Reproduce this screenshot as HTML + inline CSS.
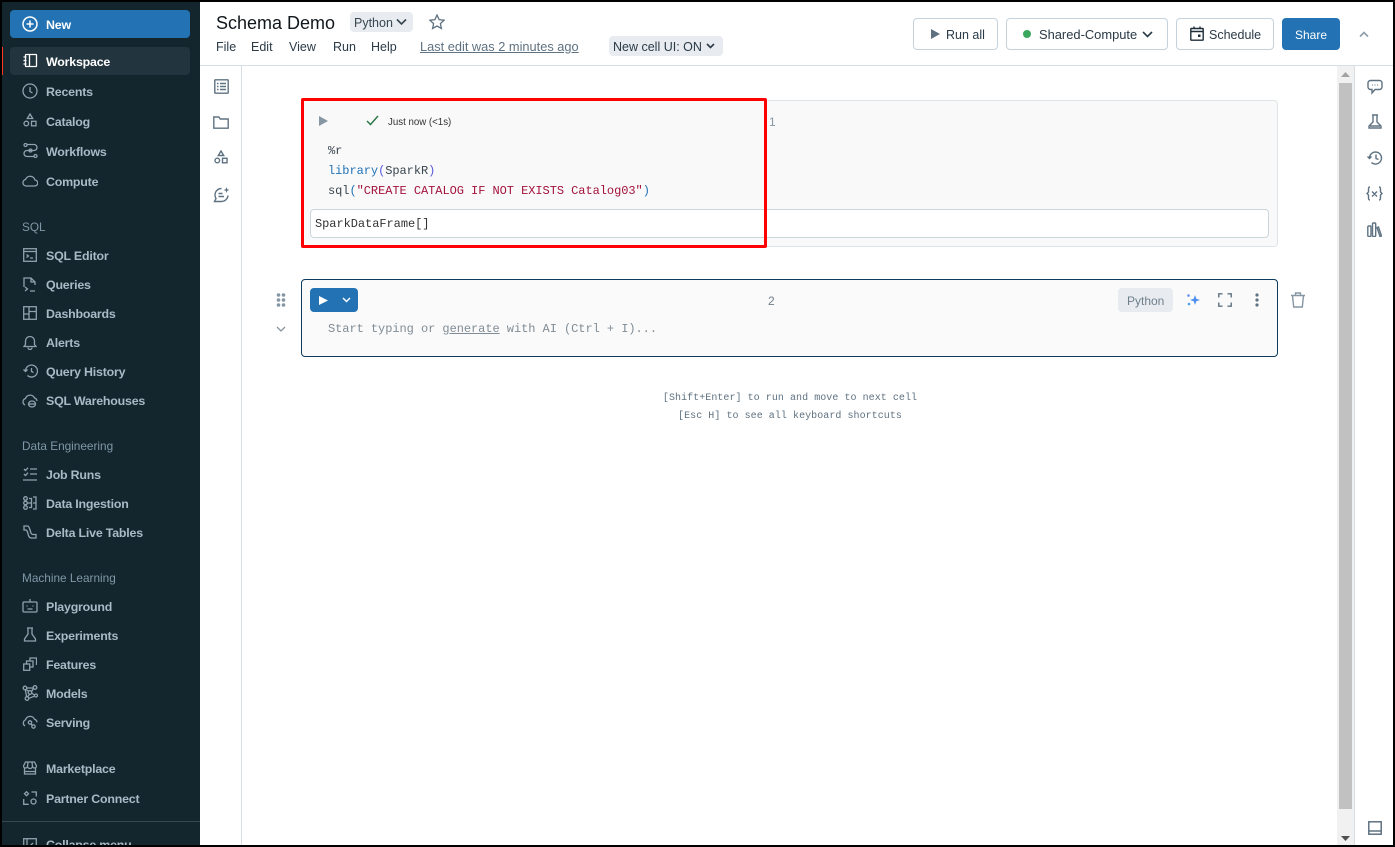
<!DOCTYPE html>
<html><head><meta charset="utf-8"><style>
*{box-sizing:border-box}
html,body{margin:0;padding:0;width:1395px;height:847px;overflow:hidden;background:#fff}
body{font-family:"Liberation Sans",sans-serif;position:relative;color:#1f2d38}
.a{position:absolute;white-space:nowrap}
.n{position:absolute;left:46px;margin-top:1px;font-size:12.400px;letter-spacing:-.2px;font-weight:700;color:#a9bac6;white-space:nowrap;line-height:16px}
.h{position:absolute;left:22px;font-size:11.800px;color:#7f97a6;white-space:nowrap;line-height:16px}
svg.i{position:absolute;fill:none;stroke:#8ea2af;stroke-width:1.3}
svg.g{position:absolute;fill:none;stroke:#5f7281;stroke-width:1.4}
.m{font-family:"Liberation Mono",monospace;letter-spacing:-.05px}
.btn{position:absolute;border:1px solid #c5d2dc;border-radius:4px;background:#fff;height:32px;top:18px}
.t{font-size:12.500px;line-height:16px;color:#2a3a47}
</style></head><body>

<div style="position:absolute;left:0;top:0;right:0;bottom:0;z-index:9;border:2px solid #000;pointer-events:none"></div>

<div style="position:absolute;left:0;top:2px;width:200px;height:843px;background:#13262e"></div>
<div class="a" style="left:10px;top:10px;width:180px;height:28px;background:#2272b4;border-radius:4px"></div>
<svg class="i" style="left:22px;top:16px;stroke:#fff;stroke-width:1.5" width="16" height="16" viewBox="0 0 16 16"><circle cx="8" cy="8" r="7"/><path d="M8 4.500v7M4.500 8h7"/></svg>
<div class="n" style="top:16px;color:#fff">New</div>
<div class="a" style="left:10px;top:47px;width:180px;height:28px;background:#22353f;border-radius:4px"></div>
<div class="a" style="left:2px;top:47px;width:1px;height:28px;background:#ff3621"></div>
<svg class="i" style="left:23px;top:53px;stroke:#fff" width="15" height="15" viewBox="0 0 15 15"><rect x="2.500" y="1.500" width="11" height="12" rx=".5"/><path d="M6.500 1.500v12M.5 4h3M.5 7.500h3M.5 11h3"/></svg>
<div class="n" style="top:53px;color:#fff">Workspace</div>

<svg class="i" style="left:22px;top:83px" width="16" height="16" viewBox="0 0 16 16"><circle cx="8" cy="8" r="7"/><path d="M8 4v4.500l2.500 1.500"/></svg>
<div class="n" style="top:83px">Recents</div>
<svg class="i" style="left:23px;top:113px" width="14" height="15" viewBox="0 0 14 15"><path d="M7 1l2.700 4.500H4.300z"/><circle cx="3.300" cy="10.500" r="2.300"/><rect x="8.500" y="8.300" width="4.500" height="4.500"/></svg>
<div class="n" style="top:113px">Catalog</div>
<svg class="i" style="left:23px;top:143px" width="15" height="15" viewBox="0 0 15 15"><path d="M4 1.500h7M4 7.500h7a2.500 2.500 0 0 0 0-6M4 7.500a3 3 0 0 0 0 6h7"/><circle cx="2.500" cy="2" r="1.500"/><circle cx="7.500" cy="7.500" r="1.500"/><circle cx="12.500" cy="13" r="1.500"/></svg>
<div class="n" style="top:143px">Workflows</div>
<svg class="i" style="left:22px;top:174px" width="16" height="14" viewBox="0 0 16 14"><path d="M4 12h8.500a3 3 0 0 0 .5-6 5 5 0 0 0-9.500-.5A3.300 3.300 0 0 0 4 12z"/></svg>
<div class="n" style="top:173px">Compute</div>

<div class="h" style="top:219px">SQL</div>
<svg class="i" style="left:23px;top:248px" width="14" height="14" viewBox="0 0 14 14"><rect x=".7" y=".7" width="12.600" height="12.600"/><path d="M.7 3.500h12.600M3.500 6.500l2 1.500-2 1.500M7 10h3"/></svg>
<div class="n" style="top:247px">SQL Editor</div>
<svg class="i" style="left:23px;top:277px" width="14" height="15" viewBox="0 0 14 15"><path d="M1 10V1h7l4 4v3M8 1v4h4M2 10l2.500 2L2 14M7 14h5"/></svg>
<div class="n" style="top:276px">Queries</div>
<svg class="i" style="left:23px;top:306px" width="14" height="14" viewBox="0 0 14 14"><rect x=".7" y=".7" width="12.600" height="12.600"/><path d="M6 .7v12.600M.7 8H6M6 5.500h7.300"/></svg>
<div class="n" style="top:305px">Dashboards</div>
<svg class="i" style="left:23px;top:335px" width="14" height="15" viewBox="0 0 14 15"><path d="M1 11.500h12l-1.500-2V6a4.500 4.500 0 0 0-9 0v3.500zM5 12.500a2 2 0 0 0 4 0"/></svg>
<div class="n" style="top:334px">Alerts</div>
<svg class="i" style="left:22px;top:364px" width="16" height="14" viewBox="0 0 16 14"><path d="M3.500 7a6 6 0 1 1 2 4.500M1.500 5.500l2 2 2-2M9.500 4v3.500l2 1"/></svg>
<div class="n" style="top:363px">Query History</div>
<svg class="i" style="left:22px;top:393px" width="16" height="15" viewBox="0 0 16 15"><path d="M3 12a3.500 3.500 0 0 1 .5-6.500 4.800 4.800 0 0 1 9-.5 3.500 3.500 0 0 1 2.500 3"/><ellipse cx="10" cy="11" rx="3.500" ry="3"/><path d="M6.500 11h7"/></svg>
<div class="n" style="top:392px">SQL Warehouses</div>

<div class="h" style="top:438px">Data Engineering</div>
<svg class="i" style="left:23px;top:467px" width="14" height="14" viewBox="0 0 14 14"><path d="M0 13h14M7 2h7M7 7h7M1 2l1.500 1.500L5 .7M1 7l1.500 1.500L5 5.700"/></svg>
<div class="n" style="top:466px">Job Runs</div>
<svg class="i" style="left:23px;top:496px" width="14" height="14" viewBox="0 0 14 14"><circle cx="2.500" cy="2.500" r="1.800"/><circle cx="2.500" cy="7" r="1.800"/><circle cx="2.500" cy="11.500" r="1.800"/><path d="M4.500 7H8M6 2.500h2.500v9H6M10 1h3v12h-3M10 7h3"/></svg>
<div class="n" style="top:495px">Data Ingestion</div>
<svg class="i" style="left:23px;top:525px" width="14" height="14" viewBox="0 0 14 14"><path d="M1 1h3.500c1 0 1.500 1 2 2.500L8 8c.5 1 1 1.500 2 1.500h3V13H8.500C7 13 6 12 5.500 10.500L4.500 7C4 5.500 3.500 5 2.500 5H1z"/></svg>
<div class="n" style="top:524px">Delta Live Tables</div>

<div class="h" style="top:570px">Machine Learning</div>
<svg class="i" style="left:22px;top:598px" width="16" height="15" viewBox="0 0 16 15"><rect x="1" y="4" width="14" height="10" rx="1"/><path d="M8 4V1M5 7.500v1M11 7.500v1M5.500 11h5"/></svg>
<div class="n" style="top:598px">Playground</div>
<svg class="i" style="left:23px;top:627px" width="14" height="15" viewBox="0 0 14 15"><path d="M4 1h6M5 1v6L1.500 12v2h11v-2L9 7V1"/></svg>
<div class="n" style="top:627px">Experiments</div>
<svg class="i" style="left:23px;top:657px" width="14" height="14" viewBox="0 0 14 14"><rect x=".7" y="7" width="6" height="6.300"/><path d="M3.500 7V4h6.500v6H7M7 4V1h6.500v7"/></svg>
<div class="n" style="top:656px">Features</div>
<svg class="i" style="left:22px;top:685px" width="16" height="16" viewBox="0 0 16 16"><circle cx="3" cy="3" r="1.800"/><circle cx="13" cy="2.500" r="1.800"/><circle cx="8" cy="7.500" r="1.800"/><circle cx="14" cy="10.500" r="1.500"/><circle cx="5" cy="13.500" r="1.800"/><path d="M4.500 3h7M4 4.500l2.800 1.800M11.500 3.500L9.500 6.500M9.500 8l3 2M7.500 9.500L5.500 11.800M12.800 11L7 13.300M3.300 4.800l1.300 6.800"/></svg>
<div class="n" style="top:685px">Models</div>
<svg class="i" style="left:22px;top:715px" width="16" height="14" viewBox="0 0 16 14"><path d="M3 11a3.500 3.500 0 0 1 .5-6.200 4.800 4.800 0 0 1 9-.5 3.500 3.500 0 0 1 2.500 3"/><circle cx="8" cy="7.500" r="1.700"/><circle cx="11.500" cy="11.500" r="1.700"/><path d="M9 9l1.500 1.500"/></svg>
<div class="n" style="top:714px">Serving</div>
<svg class="i" style="left:23px;top:761px" width="14" height="14" viewBox="0 0 14 14"><path d="M2.500 1h9L13.500 5a2 2 0 0 1-4 0 2.300 2.300 0 0 1-5 0 2 2 0 0 1-4 0zM1.500 7v6h11V7M1.500 10.500h11M5 1L4.500 5M9 1l.5 4"/></svg>
<div class="n" style="top:760px">Marketplace</div>
<svg class="i" style="left:23px;top:791px" width="14" height="14" viewBox="0 0 14 14"><path d="M3.500 .7l2 2-2 2-2-2zM8.500 1h4.800v4.500M.7 8v5.300h5"/><circle cx="10.500" cy="10.500" r="2.500"/></svg>
<div class="n" style="top:790px">Partner Connect</div>
<div class="a" style="left:2px;top:821px;width:198px;height:1px;background:#35474f"></div>
<svg class="i" style="left:23px;top:838px" width="14" height="14" viewBox="0 0 14 14"><rect x=".7" y=".7" width="12.600" height="12.600"/><path d="M4 .7v12.600M10 5L7.500 7.500 10 10"/></svg>
<div class="n" style="top:836px">Collapse menu</div>

<!-- top bar -->
<div class="a" style="left:200px;top:65px;width:1193px;height:1px;background:#d8dfe4"></div>
<div class="a" style="left:216px;top:12px;font-size:18px;line-height:22px;color:#11171c">Schema Demo</div>
<div class="a" style="left:350px;top:12px;width:63px;height:20px;background:#e8ecf0;border-radius:4px"></div>
<div class="a t" style="left:354px;top:15px;color:#37454f">Python</div>
<svg class="g" style="left:396px;top:18px;stroke:#37454f;stroke-width:1.600" width="11" height="8" viewBox="0 0 11 8"><path d="M1 1.500l4.500 4.500L10 1.500"/></svg>
<svg class="g" style="left:429px;top:14px;stroke-width:1.300" width="16" height="16" viewBox="0 0 16 16"><path d="M8 1l2.100 4.600 5 .6-3.700 3.400 1 4.900L8 12l-4.400 2.500 1-4.900L.9 6.200l5-.6z"/></svg>
<div class="a t" style="left:216px;top:39px">File</div>
<div class="a t" style="left:251px;top:39px">Edit</div>
<div class="a t" style="left:289px;top:39px">View</div>
<div class="a t" style="left:333px;top:39px">Run</div>
<div class="a t" style="left:371px;top:39px">Help</div>
<div class="a t" style="left:420px;top:39px;font-size:12.800px;color:#5f7281;text-decoration:underline">Last edit was 2 minutes ago</div>
<div class="a" style="left:609px;top:36px;width:114px;height:20px;background:#e8ecf0;border-radius:4px"></div>
<div class="a t" style="left:613px;top:39px">New cell UI: ON</div>
<svg class="g" style="left:706px;top:43px;stroke:#2a3a47;stroke-width:1.600" width="9" height="6" viewBox="0 0 9 6"><path d="M1 1l3.500 3.500L8 1"/></svg>

<div class="btn" style="left:913px;width:85px"></div>
<svg class="a" style="left:931px;top:29px" width="9" height="10" viewBox="0 0 9 10"><path d="M0 0l9 5-9 5z" fill="#5f7281"/></svg>
<div class="a t" style="left:946px;top:27px">Run all</div>
<div class="btn" style="left:1006px;width:162px"></div>
<div class="a" style="left:1023px;top:30px;width:8px;height:8px;border-radius:50%;background:#3ba65e"></div>
<div class="a t" style="left:1039px;top:27px;font-size:12.900px">Shared-Compute</div>
<svg class="g" style="left:1142px;top:31px;stroke:#2a3a47;stroke-width:1.600" width="11" height="7" viewBox="0 0 11 7"><path d="M1 1l4.500 4.500L10 1"/></svg>
<div class="btn" style="left:1176px;width:98px"></div>
<svg class="g" style="left:1190px;top:26px;stroke:#1f2d38" width="14" height="15" viewBox="0 0 14 15"><rect x=".8" y="2.500" width="12.400" height="11.700" rx=".5"/><path d="M.8 5.500h12.400M4 .5v2M10 .5v2"/><rect x="8" y="8.500" width="2.500" height="2.500" fill="#1f2d38" stroke="none"/></svg>
<div class="a t" style="left:1209px;top:27px">Schedule</div>
<div class="a" style="left:1282px;top:18px;width:58px;height:32px;background:#2272b4;border-radius:4px"></div>
<div class="a t" style="left:1295px;top:27px;color:#fff;font-size:12px">Share</div>
<svg class="g" style="left:1359px;top:31px;stroke:#8f9dA8;stroke-width:1.600" width="10" height="7" viewBox="0 0 10 7"><path d="M1 5.500l4-4 4 4"/></svg>

<!-- left tool rail -->
<div class="a" style="left:241px;top:66px;width:1px;height:779px;background:#d8dfe4"></div>
<svg class="g" style="left:214px;top:79px" width="15" height="15" viewBox="0 0 15 15"><rect x=".8" y=".8" width="13.400" height="13.400" rx=".5"/><path d="M3 4.500h1.500M6 4.500h6M3 7.500h1.500M6 7.500h6M3 10.500h1.500M6 10.500h6"/></svg>
<svg class="g" style="left:213px;top:116px" width="16" height="13" viewBox="0 0 16 13"><path d="M.8 1h5l1.500 2h7.900v9.200H.8z"/></svg>
<svg class="g" style="left:214px;top:150px" width="14" height="15" viewBox="0 0 14 15"><path d="M7 1l2.700 4.500H4.300z"/><circle cx="3.300" cy="10.500" r="2.300"/><rect x="8.500" y="8.300" width="4.500" height="4.500"/></svg>
<svg class="g" style="left:213px;top:186px" width="17" height="17" viewBox="0 0 17 17"><path d="M8.500 2.500A6.500 6.500 0 0 0 2 9a6 6 0 0 0 1 3.500L1.500 15.500H8.500a6.500 6.500 0 0 0 6.500-6M5.500 7.500h4M5.500 10.500h5.500"/><path d="M13.500 1l.8 2.200 2.200.8-2.200.8-.8 2.200-.8-2.200-2.200-.8 2.200-.8z" fill="#5f7281" stroke="none"/></svg>

<!-- cell 1 -->
<div class="a" style="left:301px;top:100px;width:977px;height:147px;background:#f9f9f9;border:1px solid #dfe4e8;border-radius:4px"></div>
<svg class="a" style="left:319px;top:116px" width="9" height="10" viewBox="0 0 9 10"><path d="M0 0l9 5-9 5z" fill="#8696a3"/></svg>
<svg class="a" style="left:366px;top:115px;fill:none;stroke:#2d7a4a;stroke-width:1.500" width="13" height="11" viewBox="0 0 13 11"><path d="M1 6l3.500 3.500L12 1"/></svg>
<div class="a" style="left:388px;top:115px;margin-top:1px;font-size:9.700px;line-height:13px;color:#333">Just now (&lt;1s)</div>
<div class="a" style="left:769px;top:115px;font-size:12px;line-height:15px;color:#8a98a3">1</div>
<div class="a m" style="left:328px;top:141px;font-size:12px;line-height:20px;color:#3a4650">%r</div>
<div class="a m" style="left:328px;top:161px;font-size:12px;line-height:20px;color:#3a4650"><span style="color:#2272b4">library</span><span style="color:#5a5ae0">(</span>SparkR<span style="color:#5a5ae0">)</span></div>
<div class="a m" style="left:328px;top:181px;font-size:12px;line-height:20px;color:#3a4650">sql<span style="color:#2272b4">(</span><span style="color:#a3123d">"CREATE CATALOG IF NOT EXISTS Catalog03"</span><span style="color:#2272b4">)</span></div>
<div class="a" style="left:310px;top:209px;width:959px;height:29px;background:#fff;border:1px solid #cbd5dc;border-radius:4px"></div>
<div class="a m" style="left:315px;top:216px;font-size:12px;line-height:16px;color:#333">SparkDataFrame[]</div>
<div class="a" style="left:301px;top:98px;width:466px;height:150px;border:3px solid #ff0000;border-radius:2px"></div>

<!-- cell 2 -->
<div class="a" style="left:301px;top:279px;width:977px;height:78px;background:#fafafa;border:1px solid #0e3a5c;border-radius:4px"></div>
<div class="a" style="left:310px;top:288px;width:48px;height:24px;background:#2272b4;border-radius:4px"></div>
<svg class="a" style="left:319px;top:296px" width="9" height="9" viewBox="0 0 9 9"><path d="M0 0l9 4.500L0 9z" fill="#fff"/></svg>
<svg class="a" style="left:342px;top:297px;fill:none;stroke:#fff;stroke-width:1.500" width="9" height="6" viewBox="0 0 9 6"><path d="M1 1l3.500 3.500L8 1"/></svg>
<div class="a" style="left:768px;top:294px;font-size:12px;line-height:15px;color:#6f7f8c">2</div>
<div class="a" style="left:1118px;top:288px;width:55px;height:24px;background:#e8ecf0;border-radius:4px"></div>
<div class="a" style="left:1127px;top:293px;font-size:12px;line-height:16px;color:#6f7f8c">Python</div>
<svg class="a" style="left:1186px;top:293px" width="14" height="14" viewBox="0 0 14 14"><path d="M9 2l1.300 3.700L14 7l-3.700 1.300L9 12 7.700 8.300 4 7l3.700-1.300z" fill="#4c8ff0"/><circle cx="2.500" cy="2.500" r="1.300" fill="#6a8ff0"/><circle cx="3" cy="11" r="1.300" fill="#4c9ff0"/></svg>
<svg class="g" style="left:1218px;top:293px" width="14" height="14" viewBox="0 0 14 14"><path d="M.8 4.500V.8h3.700M9.500.8h3.700v3.700M13.200 9.500v3.700H9.500M4.500 13.200H.8V9.500"/></svg>
<svg class="a" style="left:1255px;top:293px" width="4" height="14" viewBox="0 0 4 14"><circle cx="2" cy="2" r="1.600" fill="#5f7281"/><circle cx="2" cy="7" r="1.600" fill="#5f7281"/><circle cx="2" cy="12" r="1.600" fill="#5f7281"/></svg>
<svg class="g" style="left:1290px;top:292px;stroke:#8696a3" width="16" height="16" viewBox="0 0 16 16"><path d="M1 3.500h14M5.500 3.500V1h5v2.500M2.500 3.500l1.200 11.500h8.600l1.200-11.500"/></svg>
<svg class="a" style="left:276px;top:293px" width="10" height="14" viewBox="0 0 10 14"><g fill="#8696a3"><circle cx="2.500" cy="2" r="1.800"/><circle cx="7.500" cy="2" r="1.800"/><circle cx="2.500" cy="7" r="1.800"/><circle cx="7.500" cy="7" r="1.800"/><circle cx="2.500" cy="12" r="1.800"/><circle cx="7.500" cy="12" r="1.800"/></g></svg>
<svg class="a" style="left:276px;top:326px;fill:none;stroke:#8696a3;stroke-width:1.300" width="10" height="6" viewBox="0 0 10 6"><path d="M1 1l4 4 4-4"/></svg>
<div class="a m" style="left:328px;top:321px;font-size:12px;line-height:16px;color:#808c95">Start typing or <u>generate</u> with AI (Ctrl + I)...</div>

<div class="a m" style="left:600px;width:380px;top:390px;font-size:10px;letter-spacing:.05px;line-height:18px;color:#5f7281;text-align:center">[Shift+Enter] to run and move to next cell<br>[Esc H] to see all keyboard shortcuts</div>

<!-- scrollbar & right rail -->
<div class="a" style="left:1337px;top:66px;width:17px;height:779px;background:#f1f1f1"></div>
<div class="a" style="left:1339px;top:83px;width:13px;height:726px;background:#c1c1c1"></div>
<svg class="a" style="left:1341px;top:72px" width="9" height="5" viewBox="0 0 9 5"><path d="M4.500 0L9 5H0z" fill="#a3a3a3"/></svg>
<svg class="a" style="left:1341px;top:836px" width="9" height="5" viewBox="0 0 9 5"><path d="M0 0h9L4.500 5z" fill="#505050"/></svg>
<div class="a" style="left:1354px;top:66px;width:1px;height:779px;background:#d8dfe4"></div>
<svg class="g" style="left:1367px;top:79px" width="16" height="16" viewBox="0 0 16 16"><path d="M3.500 1.500h9a2.500 2.500 0 0 1 2.500 2.500v4a2.500 2.500 0 0 1-2.500 2.500H8L5 14v-3.500H3.500A2.500 2.500 0 0 1 1 8V4a2.500 2.500 0 0 1 2.500-2.500z"/><path d="M5 6h1M7.500 6h1M10 6h1" stroke-width="1"/></svg>
<svg class="g" style="left:1368px;top:114px" width="14" height="15" viewBox="0 0 14 15"><path d="M4 1h6M5 1v7L1 12v2h12v-2L9 8V1M2 12h10"/></svg>
<svg class="g" style="left:1367px;top:150px" width="16" height="16" viewBox="0 0 16 16"><path d="M2.500 8a6 6 0 1 1 2 4.500M.5 6.500l2 2 2-2M9 4.500v4l2.500 1"/></svg>
<svg class="g" style="left:1366px;top:186px" width="17" height="15" viewBox="0 0 17 15"><path d="M4 1C2.500 1 2.500 2 2.500 4v2L1 7.500 2.500 9v2c0 2 0 3 1.500 3M13 1c1.500 0 1.500 1 1.500 3v2L16 7.500 14.500 9v2c0 2 0 3-1.500 3M6 5.500l5 5M11 5.500l-5 5"/></svg>
<svg class="g" style="left:1367px;top:222px" width="15" height="15" viewBox="0 0 15 15"><rect x=".8" y="4" width="3.200" height="10.500" rx="1"/><rect x="5.500" y="1" width="3.200" height="13.500" rx="1"/><path d="M10 5.500l1.500-.5 3 9-1.500.5z"/></svg>
<svg class="g" style="left:1368px;top:821px;stroke-width:1.500" width="14" height="14" viewBox="0 0 14 14"><rect x=".8" y=".8" width="12.400" height="12.400"/><path d="M.8 10h12.400"/></svg>
</body></html>
